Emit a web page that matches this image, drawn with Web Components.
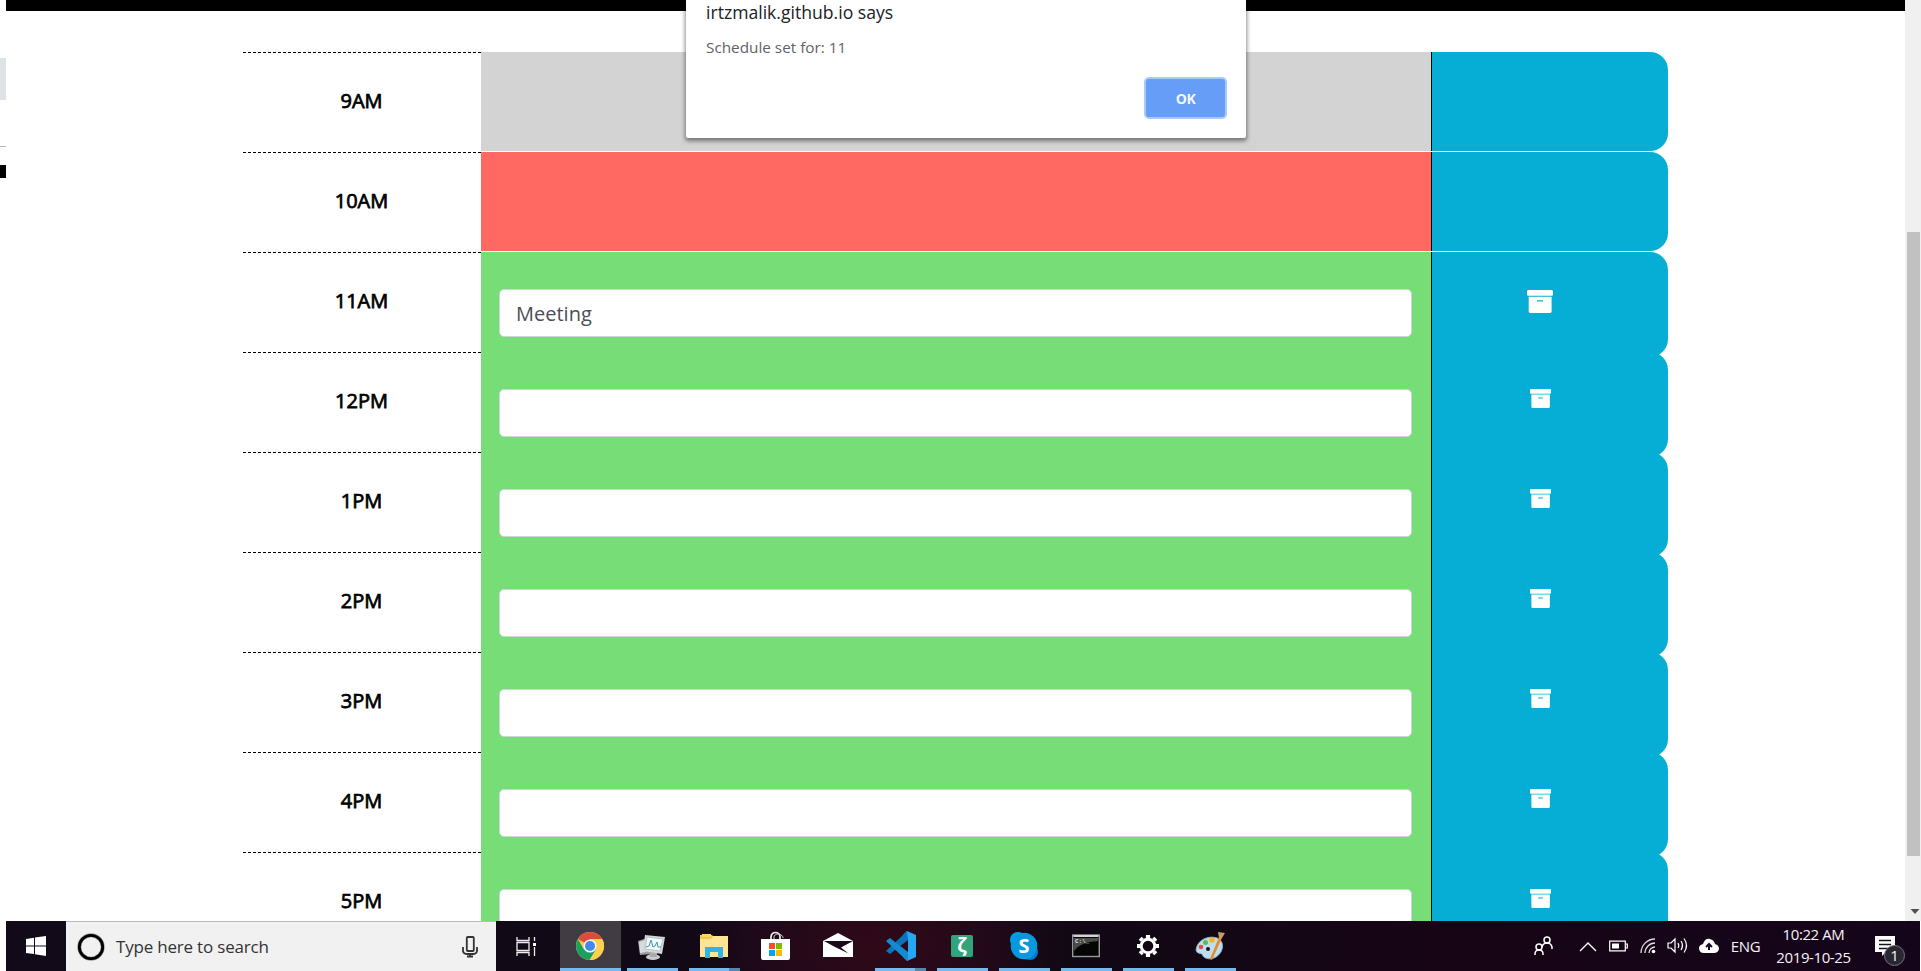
<!DOCTYPE html>
<html lang="en"><head><meta charset="utf-8"><title>Work Day Scheduler</title>
<style>
html,body{margin:0;padding:0;background:#fff;overflow:hidden}
body{width:1921px;height:971px;font-family:"Open Sans",sans-serif}
</style></head><body>
<desk-screen></desk-screen>
<script>
const def=(name,html)=>customElements.define(name,class extends HTMLElement{
  constructor(){super();this.attachShadow({mode:'open'}).innerHTML=html(this);}
});

def('archive-icon',el=>`<style>:host{display:block}svg{display:block;width:100%;height:100%}</style>
<svg viewBox="0 0 26 23" preserveAspectRatio="none"><rect x="0" y="0" width="26" height="5.7" rx="1.2" fill="#fff"/><path fill="#fff" fill-rule="evenodd" d="M1.7 6.7H24.6V21.6Q24.6 23 23.2 23H3.1Q1.7 23 1.7 21.6ZM10 10.2V11.5H16V10.2Z"/></svg>`);

def('hour-row',el=>{
  const s=el.getAttribute('state'),big=el.hasAttribute('active');
  const c={past:'#d3d3d3',present:'#ff6961',future:'#77dd77'}[s];
  return `<style>
:host{display:grid;grid-template-columns:238px 951px 236px;height:100px;box-sizing:border-box}
.time{height:100px;box-sizing:border-box;padding:35px 1px 0 0;text-align:center;font-size:20px;line-height:27px;color:#000;-webkit-text-stroke:.75px #000;
background:repeating-linear-gradient(90deg,#000 0 3.4px,#fff 3.4px 5px) 0 0/100% 1px no-repeat}
.event{box-sizing:border-box;height:${s==='future'?100:99}px;background:${c};border-right:1px solid #000;padding:37px 19px 0 18px}
.input{height:48px;box-sizing:border-box;border:1px solid #ced4da;border-radius:5px;background:#fff;color:#495057;font-size:20px;line-height:48px;padding-left:16px}
.save{height:${s==='future'?105:99}px;background:#06aed5;border-radius:0 18px 18px 0;display:flex;justify-content:center;box-sizing:border-box;padding:${big?38:37}px ${big?21:20}px 0 0}
archive-icon{width:${big?26:21}px;height:${big?23:19}px}
</style><div class="time"><slot></slot></div>
<div class="event">${s==='future'?`<div class="input">${el.getAttribute('text')||''}</div>`:''}</div>
<div class="save">${s==='future'?'<archive-icon></archive-icon>':''}</div>`});

def('day-planner',()=>`<style>:host{display:flex;flex-direction:column;padding:41px 0 0 237px;height:869px;box-sizing:border-box;overflow:hidden}hour-row{flex:none}</style>
<hour-row state="past">9AM</hour-row><hour-row state="present">10AM</hour-row><hour-row state="future" active text="Meeting">11AM</hour-row>
${['12PM','1PM','2PM','3PM','4PM','5PM'].map(t=>`<hour-row state="future">${t}</hour-row>`).join('')}`);

def('scroll-bar',()=>`<style>:host{display:flex;flex-direction:column;width:16px;height:921px;background:#f0f0f0;box-sizing:border-box;padding:232px 1px 0 2px}
.t{height:624px;background:#c1c1c1}svg{display:block;margin:53px 0 0 3px}</style><div class="t"></div><svg width="10" height="6"><path d="M.5 0H9.5L5 5Z" fill="#505050"/></svg>`);

def('alert-box',()=>`<style>:host{display:flex;flex-direction:column;box-sizing:border-box;width:560px;height:138px;background:#fff;border-radius:0 0 2px 2px;box-shadow:0 2px 4px 1px rgba(0,0,0,.45);padding:0 19px 0 20px}
.h{font-size:17.6px;line-height:24px;height:24px;color:#202124;white-space:nowrap}
.m{font-size:15.3px;line-height:20px;margin-top:13px;color:#5f6368}
button{align-self:flex-end;margin:20px 0 0;width:83px;height:42px;box-sizing:border-box;border:2px solid #a9c9fb;border-radius:5px;background:#669df6;color:#f4f8ff;font:700 14px "Open Sans",sans-serif;letter-spacing:-.4px;padding:0}
</style><div class="h"><slot name="title"></slot></div><div class="m"><slot></slot></div><button>OK</button>`);

const icons={
chrome:`<circle cx="14" cy="14" r="14" fill="#f9ce44"/><path d="M14 14 1.9 7A14 14 0 0 1 26.2 7H14Z" fill="#dc4b3e"/><path d="M1.9 7A14 14 0 0 0 13.6 28L20 17.5 14 14 8 17.5Z" fill="#1aa15f"/><path d="M14 7H26.1A14 14 0 0 1 13.6 28L20.1 17.5Z" fill="#fdd04d"/><circle cx="14" cy="14" r="6.6" fill="#f4f4f4"/><circle cx="14" cy="14" r="5" fill="#4587ef"/>`,
monitor:`<path d="M1 9 10 6 15 22 3 23Z" fill="#9b9d9f"/><path d="M2 10 8 8 9 20 3 21Z" fill="#d9dcdc"/><ellipse cx="16" cy="25" rx="7" ry="3" fill="#c9cbcd"/><path d="M13 19H20V25H13Z" fill="#aaa"/><path d="M8 3 28 5 25 22 6 19Z" fill="#d4d7d7"/><path d="M10 5 26 7 23 19 8 17Z" fill="#f3f8fa" stroke="#b7c4ca"/><path d="M9 15 12 14 14 8 16 15 18 14 20 10 21 15 24 15" fill="none" stroke="#3f91be"/>`,
folder:`<path d="M0 3H12L14 5H27V25H0Z" fill="#f3c846"/><path d="M2 2H11V5H2Z" fill="#ffd65b"/><path d="M0 7H11L13 4H28V25H0Z" fill="#ffe493"/><path d="M5 26V15H23V26H18V20H10V26Z" fill="#36b1e5"/>`,
store:`<path d="M10 8V5C10-1 19-1 19 5V8" fill="none" stroke="#eee" stroke-width="1.7"/><path d="M13 7V5C13 1 22 1 22 6" fill="none" stroke="#ccc"/><path d="M0 7H29V26Q29 28 27 28H2Q0 28 0 26Z" fill="#fff"/><path d="M8 11H14V17H8Z" fill="#f25022"/><path d="M15 11H21V17H15Z" fill="#7fba00"/><path d="M8 18H14V24H8Z" fill="#00a4ef"/><path d="M15 18H21V24H15Z" fill="#ffb900"/>`,
mail:`<path d="M0 9 15 1 30 9V25H0Z" fill="#fff"/><path d="M1 9H30L18 15.5 25.5 21.5 12 15Z" fill="#1b0b18"/>`,
code:`<path d="M21-1 30 3V25L21 29 17 25 22 21V7L17 3Z" fill="#25a7f1"/><path d="M17 3 21-1 22 8 4 22 0 19Z" fill="#0b73b9"/><path d="M0 9 4 6 22 20V29L18 26Z" fill="#1589d1"/>`,
zeta:`<rect x="3" y="3" width="22" height="22" rx="2" fill="#33a37c"/><text x="14" y="20" text-anchor="middle" fill="#fff" font-size="19" font-family="Open Sans" font-weight="700">ζ</text>`,
skype:`<circle cx="8" cy="8" r="8" fill="#00a3e8"/><circle cx="20" cy="20" r="8" fill="#0078d4"/><circle cx="14" cy="14" r="13.3" fill="#0799df"/><text x="14" y="21" text-anchor="middle" fill="#fff" font-size="20" font-family="Open Sans" font-weight="700">S</text>`,
cmd:`<rect x=".7" y="3" width="26.6" height="21.5" fill="#050505" stroke="#999" stroke-width="1.4"/><path d="M1.5 3H26.5V5H1.5Z" fill="#d1d3d5"/><path d="M2 6H26V9Q8 10 2 19Z" fill="#4b4b4b"/><text x="3" y="11" font-size="6" font-family="Liberation Mono" font-weight="700" fill="#ddd">C:\\_</text>`,
gear:`<g stroke="#fff" fill="none"><circle cx="14" cy="14" r="6.8" stroke-width="3"/><g stroke-width="4.2"><path d="M14 3V6M14 22V25M3 14H6M22 14H25M6.2 6.2 8.3 8.3M19.7 19.7 21.8 21.8M6.2 21.8 8.3 19.7M19.7 8.3 21.8 6.2"/></g></g>`,
paint:`<path d="M0 18C1 8 12 3 21 6 29 9 28 20 20 25 15 28 9 27 7 24 6 20 1 23 0 18Z" fill="#bfdeed" stroke="#7fb1cd"/><circle cx="12" cy="17" r="2" fill="#171020"/><circle cx="5" cy="15" r="2.3" fill="#df4e45"/><circle cx="9.5" cy="10.5" r="2.5" fill="#5cbd4a"/><circle cx="16" cy="8" r="2.8" fill="#f5b22d"/><path d="M23 5 26 6 16 28 14 27Z" fill="#e58b2d"/><path d="M22 0 29 1 26 6H23Z" fill="#c79b66"/>`
};
def('task-app',el=>{const u=el.getAttribute('line'),i=el.getAttribute('icon');return `<style>
:host{display:flex;flex-direction:column;align-items:center;justify-content:space-between;width:62px;height:50px;box-sizing:border-box;padding-top:11px;flex:none}
:host([icon=chrome]){background:linear-gradient(#413c44,#413c44) 1px 0/61px 50px no-repeat}
svg{display:block;overflow:visible;width:28px;height:28px;margin-left:-1px}
:host([icon=monitor]) svg,:host([icon=store]) svg,:host([icon=mail]) svg{margin-left:-3px}
:host([icon=chrome]) svg{margin-left:0}
.l{height:3px;width:51px;background:${u==='split'?'linear-gradient(90deg,#76b9ed 40px,#5785ac 40px)':u==='none'?'transparent':'#76b9ed'}}
:host([icon=chrome]) .l{width:61px;margin-left:1px}
</style><svg viewBox="0 0 28 28">${icons[i]}</svg><div class="l"></div>`});

def('search-box',()=>`<style>:host{display:flex;align-items:center;width:430px;height:50px;box-sizing:border-box;background:#f1f1f1;border-top:1px solid #bbb;padding:0 18px 0 11px;color:#333;font-size:17px}
span{flex:1;margin:0 0 0 11px;letter-spacing:-.2px}svg{display:block}</style>
<svg width="28" height="28"><circle cx="14" cy="14" r="11.7" fill="none" stroke="#999" stroke-width="4"/><circle cx="14" cy="14" r="11.7" fill="none" stroke="#000" stroke-width="2.8"/></svg>
<span>Type here to search</span>
<svg width="16" height="22" fill="none" stroke="#333" stroke-width="1.8"><rect x="4.8" y="1" width="7" height="14" rx="1"/><path d="M1 11V15Q1 17 4 18H12Q15 17 15 15V11M8 18V21M5 20.5H11"/></svg>`);

def('system-tray',()=>`<style>:host{display:grid;grid-template-columns:46px 32px 30px 28px 30px 34px 39px 97px 58px;align-items:center;justify-items:center;width:394px;height:50px;color:#f5f2f6;margin-left:auto}
svg{display:block;overflow:visible}.p{justify-self:start;margin-left:8px}.e{font-size:15px;letter-spacing:-.35px}.c{text-align:center;font-size:15px;line-height:23px;letter-spacing:-.4px;white-space:nowrap;padding-bottom:1px}
.n{position:relative;width:32px;height:20px}.b{position:absolute;left:9px;top:9px;width:19px;height:19px;border:1px solid #777;border-radius:50%;background:#292832;text-align:center;font-size:15px;line-height:19px}
</style>
<svg class="p" width="19" height="20" fill="none" stroke="#fff" stroke-width="1.5"><circle cx="5" cy="11" r="3"/><path d="M1 19V18Q1 14 5 14T9 18V19"/><circle cx="13" cy="4" r="3"/><path d="M8 11Q9 7 13 7T18 11V13"/></svg>
<svg width="16" height="9"><path d="M0 9 8 1 16 9" fill="none" stroke="#fff" stroke-width="1.4"/></svg>
<svg width="20" height="12"><path d="M.7 1.2H16.3V10.8H.7ZM16 4H18.3V8H16" fill="none" stroke="#fff" stroke-width="1.2"/><path d="M3 3.5H10V8.5H3Z" fill="#fff"/></svg>
<svg width="16" height="16" fill="none" stroke="#ddd" stroke-width="1.3"><path d="M1 15A14 14 0 0 1 15 1M5 15A10 10 0 0 1 15 5M9 15A6 6 0 0 1 15 9"/><circle cx="13.5" cy="13.5" r="1.8" fill="#fff" stroke="none"/></svg>
<svg width="20" height="18" fill="none" stroke="#fff" stroke-width="1.2"><path d="M1 6H4L8 2V15L4 11H1ZM11 6Q12.5 9 11 11M14 4Q17 8.5 14 13M17 1.5Q22 8.5 17 15.5"/></svg>
<svg width="20" height="14"><path d="M5 14Q0 14 0 9 0 6 4 5 6-1 11 0 15 1 16 5 20 6 20 10 19 14 15 14Z" fill="#fff"/><path d="M10 11V5M7 8 10 5 13 8" fill="none" stroke="#170a1e" stroke-width="2"/></svg>
<span class="e">ENG</span><div class="c">10:22 AM<br>2019-10-25</div>
<div class="n"><svg width="21" height="20"><path d="M0 0H20V16H11L7 20V16H0Z" fill="#fff"/><path d="M4 4.5H16M4 8.5H16M4 12.5H16" stroke="#171020" stroke-width="1.3"/></svg><div class="b">1</div></div>`);

def('task-bar',()=>`<style>:host{display:flex;width:1914px;height:50px;background:radial-gradient(ellipse 190px 100px at 875px 25px,#310918,#21091a 60%,transparent),linear-gradient(90deg,#120a19,#110814 55%,#170515 75%,#15051b)}
.s{width:60px;height:50px;display:flex;align-items:center;justify-content:center}.v{width:63px;height:50px;display:flex;align-items:center;justify-content:center;box-sizing:border-box;padding-right:2px}svg{display:block}</style>
<div class="s"><svg width="20" height="20" fill="#fff"><path d="M0 3 8 1.8V9.5H0ZM9 1.6 20 0V9.5H9ZM0 10.5H8V18L0 17ZM9 10.5H20V20L9 18.3Z"/></svg></div>
<search-box></search-box>
<div class="v"><svg width="21" height="19" fill="none" stroke="#eee" stroke-width="1.3"><path d="M1 0V3.5H13V0M1 19V15.5H13V19M1 5.5H13V13.5H1ZM18.5 0V4M18.5 10V19"/><path d="M17 6H20V9H17Z" fill="#fff" stroke="none"/></svg></div>
<task-app icon="chrome"></task-app><task-app icon="monitor"></task-app><task-app icon="folder" line="split"></task-app><task-app icon="store" line="none"></task-app><task-app icon="mail" line="none"></task-app><task-app icon="code" line="split"></task-app><task-app icon="zeta"></task-app><task-app icon="skype"></task-app><task-app icon="cmd"></task-app><task-app icon="gear"></task-app><task-app icon="paint"></task-app>
<system-tray></system-tray>`);

def('desk-screen',()=>`<style>:host{display:grid;grid-template-columns:6px 1899px 16px;grid-template-rows:921px 50px;width:1921px;height:971px;position:relative;overflow:hidden}
.edge{grid-row:1/3;background:linear-gradient(#fff 58px,#dee1e6 58px 100px,#fff 100px 146px,#b6b6b6 146px 147px,#fff 147px 165px,#000 165px 178px,#fff 178px)}
.page{overflow:hidden}.bar{height:11px;background:#000}day-planner{height:910px}
task-bar{grid-column:2/4}alert-box{position:absolute;left:686px;top:0}</style>
<div class="edge"></div><div class="page"><div class="bar"></div><day-planner></day-planner></div><scroll-bar></scroll-bar><task-bar></task-bar>
<alert-box><span slot="title">irtzmalik.github.io says</span>Schedule set for: 11</alert-box>`);
</script></body></html>
